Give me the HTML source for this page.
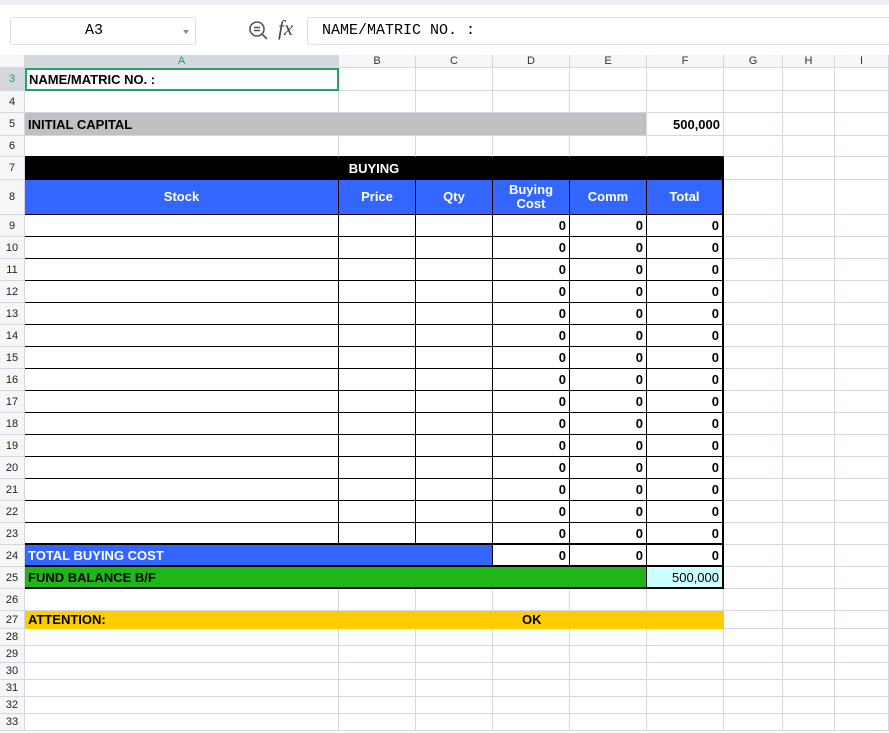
<!DOCTYPE html>
<html><head><meta charset="utf-8"><style>
*{box-sizing:border-box;margin:0;padding:0}
body{width:889px;height:733px;overflow:hidden;background:#fff;font-family:"Liberation Sans",Arial,sans-serif;position:relative}
.top{position:absolute;left:0;top:0;width:889px;height:55px;background:#fff;border-top:5px solid #eef0f3}
.nb{position:absolute;left:10px;top:12px;width:186px;height:28px;border:1px solid #dcdfe5;border-radius:3px;font:15px "Liberation Mono",monospace;text-align:center;line-height:26px;padding-right:18px}
.nb:after{content:"";position:absolute;right:6px;top:12px;border:3px solid transparent;border-top:4px solid #888}
.fb{position:absolute;left:307px;top:12px;width:590px;height:28px;border:1px solid #dcdfe5;border-radius:3px;font:15px "Liberation Mono",monospace;line-height:26px;padding-left:14px}
.fx{position:absolute;left:278px;top:11px;font:italic 21px "Liberation Serif",serif;color:#444}
.grid{position:absolute;left:0;top:55px;width:889px}
.r{display:flex;width:889px}
.c{flex:none;border-right:1px solid #d3d7df;border-bottom:1px solid #d3d7df;font-size:13px;font-weight:bold;white-space:nowrap;overflow:visible;display:flex;align-items:center;padding:0 3px}
.h{width:25px;background:#f5f6f8;justify-content:center;font-weight:normal;font-size:11px;color:#222;padding:0;border-right:1px solid #d3d7df}
.A{width:314px}.B,.C,.D,.E,.F{width:77px}.G{width:59px}.H{width:52px}.I{width:54px}
.ch .c{background:#f5f6f8;font-weight:normal;font-size:11px;justify-content:center;color:#333}
.k{border-right-color:#000;border-bottom-color:#000}
.n{justify-content:flex-end}
.bl{background:#3366ff;color:#fff;justify-content:center;text-align:center;line-height:14px}
</style></head><body>
<div class="top">
<div class="nb">A3</div>
<svg style="position:absolute;left:248px;top:15px" width="22" height="22" viewBox="0 0 22 22"><circle cx="9" cy="9" r="7" fill="none" stroke="#555" stroke-width="1.6"/><path d="M6 7.5h6M6 10.5h6M14 14l5 5" stroke="#555" stroke-width="1.6"/></svg>
<div class="fx">fx</div>
<div class="fb">NAME/MATRIC NO. :</div>
</div>
<div class="grid">
<div class="r ch" style="height:13px"><div class="c h" style="background:#f5f6f8"></div><div class="c A" style="background:#d4d7de;color:#21a366">A</div><div class="c B">B</div><div class="c C">C</div><div class="c D">D</div><div class="c E">E</div><div class="c F">F</div><div class="c G">G</div><div class="c H">H</div><div class="c I">I</div></div>
<div class="r" style="height:23px"><div class="c h" style="background:#d4d7de;color:#21a366">3</div><div class="c A" style="border:2px solid #21a366;padding-left:2px">NAME/MATRIC NO. :</div><div class="c B"></div><div class="c C"></div><div class="c D"></div><div class="c E"></div><div class="c F"></div><div class="c G"></div><div class="c H"></div><div class="c I"></div></div>
<div class="r" style="height:22px"><div class="c h">4</div><div class="c A"></div><div class="c B"></div><div class="c C"></div><div class="c D"></div><div class="c E"></div><div class="c F"></div><div class="c G"></div><div class="c H"></div><div class="c I"></div></div>
<div class="r" style="height:23px"><div class="c h">5</div><div style="width:622px;background:#c0c0c0;border-bottom:1px solid #d3d7df" class="c">INITIAL CAPITAL</div><div class="c F n">500,000</div><div class="c G"></div><div class="c H"></div><div class="c I"></div></div>
<div class="r" style="height:21px"><div class="c h">6</div><div class="c A k" style="border-right-color:#d3d7df"></div><div class="c B k" style="border-right-color:#d3d7df"></div><div class="c C k" style="border-right-color:#d3d7df"></div><div class="c D k" style="border-right-color:#d3d7df"></div><div class="c E k" style="border-right-color:#d3d7df"></div><div class="c F k" style="border-right-color:#d3d7df"></div><div class="c G"></div><div class="c H"></div><div class="c I"></div></div>
<div class="r" style="height:23px"><div class="c h">7</div><div class="c" style="width:699px;background:#000;color:#fff;justify-content:center;border-color:#000">BUYING</div><div class="c G"></div><div class="c H"></div><div class="c I"></div></div>
<div class="r" style="height:35px"><div class="c h">8</div><div class="c A k bl">Stock</div><div class="c B k bl">Price</div><div class="c C k bl">Qty</div><div class="c D k bl">Buying<br>Cost</div><div class="c E k bl">Comm</div><div class="c F k bl" style="border-right-width:2px">Total</div><div class="c G"></div><div class="c H"></div><div class="c I"></div></div>
<div class="r" style="height:22px"><div class="c h">9</div><div class="c A k"></div><div class="c B k"></div><div class="c C k"></div><div class="c D k n">0</div><div class="c E k n">0</div><div class="c F k n" style="border-right-width:2px">0</div><div class="c G"></div><div class="c H"></div><div class="c I"></div></div>
<div class="r" style="height:22px"><div class="c h">10</div><div class="c A k"></div><div class="c B k"></div><div class="c C k"></div><div class="c D k n">0</div><div class="c E k n">0</div><div class="c F k n" style="border-right-width:2px">0</div><div class="c G"></div><div class="c H"></div><div class="c I"></div></div>
<div class="r" style="height:22px"><div class="c h">11</div><div class="c A k"></div><div class="c B k"></div><div class="c C k"></div><div class="c D k n">0</div><div class="c E k n">0</div><div class="c F k n" style="border-right-width:2px">0</div><div class="c G"></div><div class="c H"></div><div class="c I"></div></div>
<div class="r" style="height:22px"><div class="c h">12</div><div class="c A k"></div><div class="c B k"></div><div class="c C k"></div><div class="c D k n">0</div><div class="c E k n">0</div><div class="c F k n" style="border-right-width:2px">0</div><div class="c G"></div><div class="c H"></div><div class="c I"></div></div>
<div class="r" style="height:22px"><div class="c h">13</div><div class="c A k"></div><div class="c B k"></div><div class="c C k"></div><div class="c D k n">0</div><div class="c E k n">0</div><div class="c F k n" style="border-right-width:2px">0</div><div class="c G"></div><div class="c H"></div><div class="c I"></div></div>
<div class="r" style="height:22px"><div class="c h">14</div><div class="c A k"></div><div class="c B k"></div><div class="c C k"></div><div class="c D k n">0</div><div class="c E k n">0</div><div class="c F k n" style="border-right-width:2px">0</div><div class="c G"></div><div class="c H"></div><div class="c I"></div></div>
<div class="r" style="height:22px"><div class="c h">15</div><div class="c A k"></div><div class="c B k"></div><div class="c C k"></div><div class="c D k n">0</div><div class="c E k n">0</div><div class="c F k n" style="border-right-width:2px">0</div><div class="c G"></div><div class="c H"></div><div class="c I"></div></div>
<div class="r" style="height:22px"><div class="c h">16</div><div class="c A k"></div><div class="c B k"></div><div class="c C k"></div><div class="c D k n">0</div><div class="c E k n">0</div><div class="c F k n" style="border-right-width:2px">0</div><div class="c G"></div><div class="c H"></div><div class="c I"></div></div>
<div class="r" style="height:22px"><div class="c h">17</div><div class="c A k"></div><div class="c B k"></div><div class="c C k"></div><div class="c D k n">0</div><div class="c E k n">0</div><div class="c F k n" style="border-right-width:2px">0</div><div class="c G"></div><div class="c H"></div><div class="c I"></div></div>
<div class="r" style="height:22px"><div class="c h">18</div><div class="c A k"></div><div class="c B k"></div><div class="c C k"></div><div class="c D k n">0</div><div class="c E k n">0</div><div class="c F k n" style="border-right-width:2px">0</div><div class="c G"></div><div class="c H"></div><div class="c I"></div></div>
<div class="r" style="height:22px"><div class="c h">19</div><div class="c A k"></div><div class="c B k"></div><div class="c C k"></div><div class="c D k n">0</div><div class="c E k n">0</div><div class="c F k n" style="border-right-width:2px">0</div><div class="c G"></div><div class="c H"></div><div class="c I"></div></div>
<div class="r" style="height:22px"><div class="c h">20</div><div class="c A k"></div><div class="c B k"></div><div class="c C k"></div><div class="c D k n">0</div><div class="c E k n">0</div><div class="c F k n" style="border-right-width:2px">0</div><div class="c G"></div><div class="c H"></div><div class="c I"></div></div>
<div class="r" style="height:22px"><div class="c h">21</div><div class="c A k"></div><div class="c B k"></div><div class="c C k"></div><div class="c D k n">0</div><div class="c E k n">0</div><div class="c F k n" style="border-right-width:2px">0</div><div class="c G"></div><div class="c H"></div><div class="c I"></div></div>
<div class="r" style="height:22px"><div class="c h">22</div><div class="c A k"></div><div class="c B k"></div><div class="c C k"></div><div class="c D k n">0</div><div class="c E k n">0</div><div class="c F k n" style="border-right-width:2px">0</div><div class="c G"></div><div class="c H"></div><div class="c I"></div></div>
<div class="r" style="height:22px"><div class="c h">23</div><div class="c A k" style="border-bottom-width:2px"></div><div class="c B k" style="border-bottom-width:2px"></div><div class="c C k" style="border-bottom-width:2px"></div><div class="c D k n" style="border-bottom-width:2px">0</div><div class="c E k n" style="border-bottom-width:2px">0</div><div class="c F k n" style="border-right-width:2px;border-bottom-width:2px">0</div><div class="c G"></div><div class="c H"></div><div class="c I"></div></div>
<div class="r" style="height:22px"><div class="c h">24</div><div class="c k" style="width:468px;background:#3366ff;color:#fff;border-bottom-width:2px">TOTAL BUYING COST</div><div class="c D k n" style="border-bottom-width:2px">0</div><div class="c E k n" style="border-bottom-width:2px">0</div><div class="c F k n" style="border-right-width:2px;border-bottom-width:2px">0</div><div class="c G"></div><div class="c H"></div><div class="c I"></div></div>
<div class="r" style="height:22px"><div class="c h">25</div><div class="c k" style="width:622px;background:#1fb61a;border-bottom-width:2px">FUND BALANCE B/F</div><div class="c F k n" style="background:#ccffff;border-right-width:2px;border-bottom-width:2px;font-weight:normal">500,000</div><div class="c G"></div><div class="c H"></div><div class="c I"></div></div>
<div class="r" style="height:22px"><div class="c h">26</div><div class="c A"></div><div class="c B"></div><div class="c C"></div><div class="c D"></div><div class="c E"></div><div class="c F"></div><div class="c G"></div><div class="c H"></div><div class="c I"></div></div>
<div class="r" style="height:18px"><div class="c h">27</div><div class="c" style="width:699px;background:#ffcc00;border-color:#ffcc00;position:relative">ATTENTION:<span style="position:absolute;left:497px">OK</span></div><div class="c G"></div><div class="c H"></div><div class="c I"></div></div>
<div class="r" style="height:17px"><div class="c h">28</div><div class="c A"></div><div class="c B"></div><div class="c C"></div><div class="c D"></div><div class="c E"></div><div class="c F"></div><div class="c G"></div><div class="c H"></div><div class="c I"></div></div>
<div class="r" style="height:17px"><div class="c h">29</div><div class="c A"></div><div class="c B"></div><div class="c C"></div><div class="c D"></div><div class="c E"></div><div class="c F"></div><div class="c G"></div><div class="c H"></div><div class="c I"></div></div>
<div class="r" style="height:17px"><div class="c h">30</div><div class="c A"></div><div class="c B"></div><div class="c C"></div><div class="c D"></div><div class="c E"></div><div class="c F"></div><div class="c G"></div><div class="c H"></div><div class="c I"></div></div>
<div class="r" style="height:17px"><div class="c h">31</div><div class="c A"></div><div class="c B"></div><div class="c C"></div><div class="c D"></div><div class="c E"></div><div class="c F"></div><div class="c G"></div><div class="c H"></div><div class="c I"></div></div>
<div class="r" style="height:17px"><div class="c h">32</div><div class="c A"></div><div class="c B"></div><div class="c C"></div><div class="c D"></div><div class="c E"></div><div class="c F"></div><div class="c G"></div><div class="c H"></div><div class="c I"></div></div>
<div class="r" style="height:17px"><div class="c h">33</div><div class="c A"></div><div class="c B"></div><div class="c C"></div><div class="c D"></div><div class="c E"></div><div class="c F"></div><div class="c G"></div><div class="c H"></div><div class="c I"></div></div>
</div>
</body></html>
